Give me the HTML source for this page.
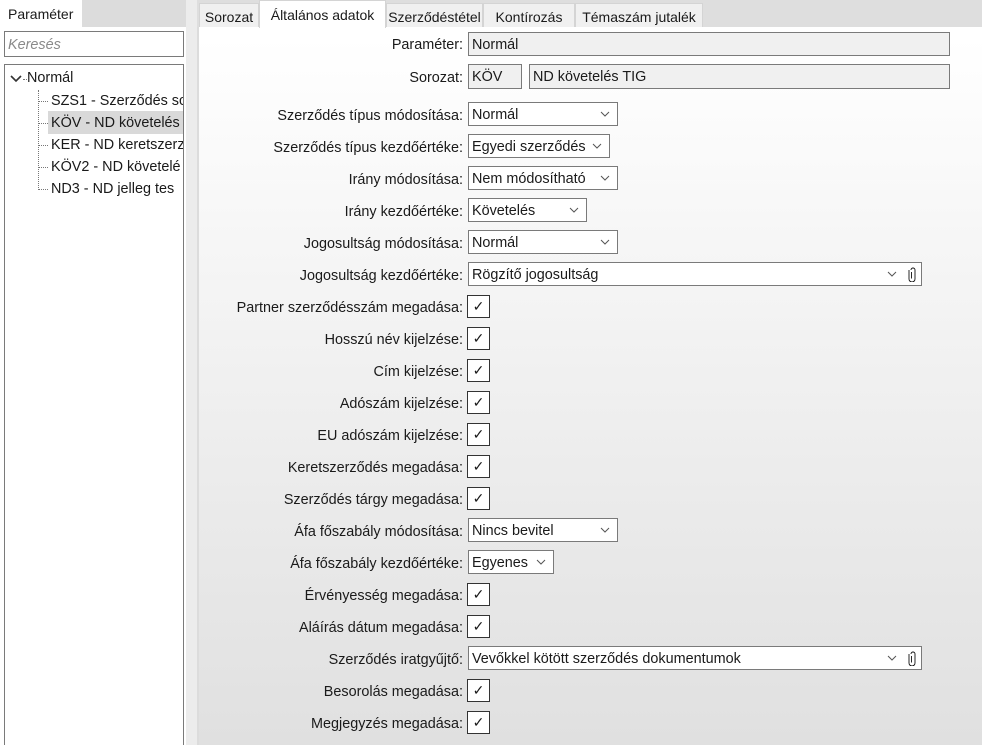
<!DOCTYPE html>
<html><head><meta charset="utf-8"><style>
*{box-sizing:border-box;margin:0;padding:0}
html,body{width:982px;height:745px;overflow:hidden}
body{position:relative;font-family:"Liberation Sans",sans-serif;font-size:14.4px;color:#1a1a1a;background:#ececec}
.a{position:absolute;white-space:nowrap}
.left{left:0;top:0;width:186px;height:745px;background:#fff}
.ltabbar{left:0;top:0;width:186px;height:27px;background:#dcdcdc}
.ltab{left:0;top:0;width:82px;height:27px;background:#fff;padding:6px 0 0 8px;font-size:14px}
.search{left:4px;top:31px;width:180px;height:26px;border:1px solid #7a7a7a;color:#8a8a8a;font-style:italic;padding:5px 0 0 3px}
.tree{left:4px;top:64px;width:180px;height:700px;border:1px solid #7a7a7a;overflow:hidden}
.right{left:197px;top:0;width:785px;height:745px;background:linear-gradient(#fff 5%,#e0e0e0 100%);border-left:2px solid #dcdcdc}
.tabbar{left:197px;top:0;width:785px;height:27px;background:#dedede}
.tab{top:3px;height:24px;background:#f0f0f0;border:1px solid #d4d4d4;border-bottom:none;padding:5px 0 0 0;text-align:center;overflow:hidden;font-size:14px}
.lbl{right:519px;text-align:right}
.f{left:468px;height:24px;border:1px solid #7a7a7a;background:#fff;padding:4px 0 0 3px}
.ro{background:#f0f0f0}
.f svg.c{position:absolute;right:7px;top:8px}
.cb{left:467px;width:23px;height:23px;border:1px solid #333;background:#fff;text-align:center;font-size:14px;line-height:21px}
.tree .a{margin-top:1px}
</style></head><body>
<div class="a left"></div>
<div class="a ltabbar"></div>
<div class="a ltab">Paraméter</div>
<div class="a search">Keresés</div>
<div class="a tree">
<svg class="a" style="left:4px;top:8px" width="14" height="10"><path d="M2 2l5 5 5-5" stroke="#333" stroke-width="1.6" fill="none"/></svg>
<div class="a" style="left:18px;top:13px;width:4px;border-top:1px dotted #777"></div>
<div class="a" style="left:22px;top:4px">Normál</div>
<div class="a" style="left:33px;top:24px;height:100px;border-left:1px dotted #777"></div>
<div class="a" style="left:33px;top:35px;width:10px;border-top:1px dotted #777"></div>
<div class="a" style="left:33px;top:57px;width:10px;border-top:1px dotted #777"></div>
<div class="a" style="left:33px;top:79px;width:10px;border-top:1px dotted #777"></div>
<div class="a" style="left:33px;top:101px;width:10px;border-top:1px dotted #777"></div>
<div class="a" style="left:33px;top:123px;width:10px;border-top:1px dotted #777"></div>
<div class="a" style="left:43px;top:45px;width:135px;height:23px;background:#d9d9d9"></div>
<div class="a" style="left:46px;top:27px">SZS1 - Szerződés sc</div>
<div class="a" style="left:46px;top:49px">KÖV - ND követelés</div>
<div class="a" style="left:46px;top:71px">KER - ND keretszerz</div>
<div class="a" style="left:46px;top:93px">KÖV2 - ND követelé</div>
<div class="a" style="left:46px;top:115px">ND3 - ND jelleg tes</div>
</div>
<div class="a right"></div>
<div class="a tabbar"></div>
<div class="a tab" style="left:199px;width:60px">Sorozat</div>
<div class="a" style="left:259px;top:0;width:127px;height:28px;background:#fff;padding:6px 0 0 0;text-align:center;border:1px solid #d4d4d4;border-bottom:none;font-size:14px">Általános adatok</div>
<div class="a tab" style="left:386px;width:97px">Szerződéstétel</div>
<div class="a tab" style="left:483px;width:92px">Kontírozás</div>
<div class="a tab" style="left:575px;width:128px">Témaszám jutalék</div>

<div class="a lbl" style="top:37px">Paraméter:</div>
<div class="a f ro" style="top:32px;width:482px">Normál</div>
<div class="a lbl" style="top:70px">Sorozat:</div>
<div class="a f ro" style="top:64px;width:54px;height:25px">KÖV</div>
<div class="a f ro" style="left:529px;top:64px;width:421px;height:25px">ND követelés TIG</div>

<div class="a lbl" style="top:108px">Szerződés típus módosítása:</div>
<div class="a f" style="top:102px;width:150px">Normál<svg class="c" width="10" height="6"><path d="M1 1l4 4 4-4" stroke="#555" fill="none"/></svg></div>
<div class="a lbl" style="top:140px">Szerződés típus kezdőértéke:</div>
<div class="a f" style="top:134px;width:142px">Egyedi szerződés<svg class="c" width="10" height="6"><path d="M1 1l4 4 4-4" stroke="#555" fill="none"/></svg></div>
<div class="a lbl" style="top:172px">Irány módosítása:</div>
<div class="a f" style="top:166px;width:150px">Nem módosítható<svg class="c" width="10" height="6"><path d="M1 1l4 4 4-4" stroke="#555" fill="none"/></svg></div>
<div class="a lbl" style="top:204px">Irány kezdőértéke:</div>
<div class="a f" style="top:198px;width:119px">Követelés<svg class="c" width="10" height="6"><path d="M1 1l4 4 4-4" stroke="#555" fill="none"/></svg></div>
<div class="a lbl" style="top:236px">Jogosultság módosítása:</div>
<div class="a f" style="top:230px;width:150px">Normál<svg class="c" width="10" height="6"><path d="M1 1l4 4 4-4" stroke="#555" fill="none"/></svg></div>
<div class="a lbl" style="top:268px">Jogosultság kezdőértéke:</div>
<div class="a f" style="top:262px;width:454px">Rögzítő jogosultság<svg class="c" style="right:24px" width="10" height="6"><path d="M1 1l4 4 4-4" stroke="#555" fill="none"/></svg><svg class="a" style="right:5px;top:4px" width="8" height="15"><path d="M3.5 5v6.5M1 3v9a3 3 0 0 0 6 0V3a2 2 0 0 0-4 0" stroke="#111" stroke-width="0.9" fill="none"/></svg></div>

<div class="a lbl" style="top:300px">Partner szerződésszám megadása:</div><div class="a cb" style="top:295px">✓</div>
<div class="a lbl" style="top:332px">Hosszú név kijelzése:</div><div class="a cb" style="top:327px">✓</div>
<div class="a lbl" style="top:364px">Cím kijelzése:</div><div class="a cb" style="top:359px">✓</div>
<div class="a lbl" style="top:396px">Adószám kijelzése:</div><div class="a cb" style="top:391px">✓</div>
<div class="a lbl" style="top:428px">EU adószám kijelzése:</div><div class="a cb" style="top:423px">✓</div>
<div class="a lbl" style="top:460px">Keretszerződés megadása:</div><div class="a cb" style="top:455px">✓</div>
<div class="a lbl" style="top:492px">Szerződés tárgy megadása:</div><div class="a cb" style="top:487px">✓</div>

<div class="a lbl" style="top:524px">Áfa főszabály módosítása:</div>
<div class="a f" style="top:518px;width:150px">Nincs bevitel<svg class="c" width="10" height="6"><path d="M1 1l4 4 4-4" stroke="#555" fill="none"/></svg></div>
<div class="a lbl" style="top:556px">Áfa főszabály kezdőértéke:</div>
<div class="a f" style="top:550px;width:86px">Egyenes<svg class="c" width="10" height="6"><path d="M1 1l4 4 4-4" stroke="#555" fill="none"/></svg></div>
<div class="a lbl" style="top:588px">Érvényesség megadása:</div><div class="a cb" style="top:583px">✓</div>
<div class="a lbl" style="top:620px">Aláírás dátum megadása:</div><div class="a cb" style="top:615px">✓</div>
<div class="a lbl" style="top:652px">Szerződés iratgyűjtő:</div>
<div class="a f" style="top:646px;width:454px">Vevőkkel kötött szerződés dokumentumok<svg class="c" style="right:24px" width="10" height="6"><path d="M1 1l4 4 4-4" stroke="#555" fill="none"/></svg><svg class="a" style="right:5px;top:4px" width="8" height="15"><path d="M3.5 5v6.5M1 3v9a3 3 0 0 0 6 0V3a2 2 0 0 0-4 0" stroke="#111" stroke-width="0.9" fill="none"/></svg></div>
<div class="a lbl" style="top:684px">Besorolás megadása:</div><div class="a cb" style="top:679px">✓</div>
<div class="a lbl" style="top:716px">Megjegyzés megadása:</div><div class="a cb" style="top:711px">✓</div>
</body></html>
